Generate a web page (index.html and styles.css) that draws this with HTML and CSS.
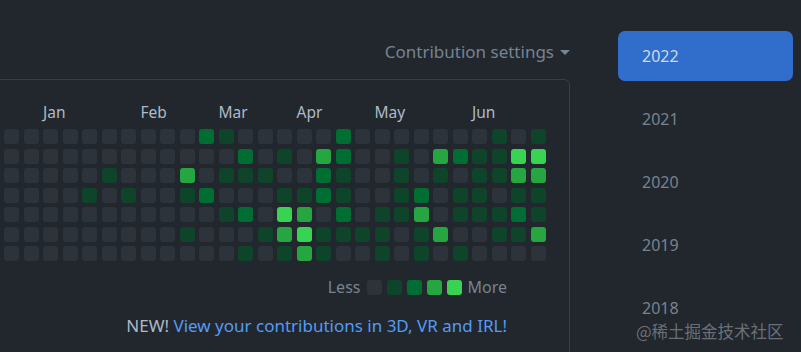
FILE: index.html
```html
<!DOCTYPE html>
<html lang="en">
<head>
    <meta charset="UTF-8">
    <meta name="viewport" content="width=device-width, initial-scale=1.0">
    <title>Contributions</title>
    <link rel="stylesheet" href="styles.css">
</head>
<body>
    <div class="page">
        <div class="main">
            <div class="header">
                <span class="settings">Contribution settings</span>
                <span class="caret"></span>
            </div>
            <div class="calendar">
                <div class="months">
                    <span class="m-jan">Jan</span>
                    <span class="m-feb">Feb</span>
                    <span class="m-mar">Mar</span>
                    <span class="m-apr">Apr</span>
                    <span class="m-may">May</span>
                    <span class="m-jun">Jun</span>
                </div>
                <div class="days" id="days"></div>
                <div class="legend">
                    <span>Less</span>
                    <span class="day l0"></span>
                    <span class="day l1"></span>
                    <span class="day l2"></span>
                    <span class="day l3"></span>
                    <span class="day l4"></span>
                    <span>More</span>
                </div>
                <div class="news">
                    NEW! <a href="#">View your contributions in 3D, VR and IRL!</a>
                </div>
            </div>
        </div>
        <ul class="years">
            <li class="year active">2022</li>
            <li class="year">2021</li>
            <li class="year">2020</li>
            <li class="year">2019</li>
            <li class="year">2018</li>
        </ul>
    </div>
    <div class="watermark">@稀土掘金技术社区</div>

    <script>
        const rows = [
            '0000000000210000020000000101',
            '0000000000002010320010321144',
            '0000010003011100210010101133',
            '0000101001200011210012011011',
            '0000000000012043020113011121',
            '0000000001000134111101300113',
            '0000000000001013100101010000'
        ];
        const days = document.getElementById('days');
        rows.forEach(row => {
            for (const level of row) {
                const cell = document.createElement('span');
                cell.className = 'day l' + level;
                days.appendChild(cell);
            }
        });
    </script>
</body>
</html>
```

FILE: styles.css
```css
body {
    margin: 0;
    background-color: #22272e;
    font-family: "Noto Sans", "Open Sans", sans-serif;
    overflow: hidden;
}

.page {
    display: flex;
    align-items: flex-start;
}

.main {
    width: 570px;
}

.header {
    height: 79px;
    padding-top: 24px;
    box-sizing: border-box;
    display: flex;
    align-items: center;
    justify-content: flex-end;
    gap: 6px;
}

.settings {
    color: #768390;
    font-size: 17px;
}

.caret {
    width: 0;
    height: 0;
    border-left: 5px solid transparent;
    border-right: 5px solid transparent;
    border-top: 5px solid #768390;
    margin-top: 2px;
}

.calendar {
    margin-left: -20px;
    padding: 22px 0 0 23px;
    height: 250px;
    border: 1px solid #373e47;
    border-bottom: none;
    border-top-right-radius: 6px;
}

.months {
    display: grid;
    grid-template-columns: repeat(28, 15px);
    column-gap: 4.5px;
    height: 20px;
    line-height: 20px;
    font-size: 15.5px;
    color: #adbac7;
}

.m-jan { grid-column: 3 / span 3; }
.m-feb { grid-column: 8 / span 3; }
.m-mar { grid-column: 12 / span 3; }
.m-apr { grid-column: 16 / span 3; }
.m-may { grid-column: 20 / span 3; }
.m-jun { grid-column: 25 / span 3; }

.days {
    margin-top: 7px;
    display: grid;
    grid-template-columns: repeat(28, 15px);
    grid-template-rows: repeat(7, 15px);
    gap: 4.5px;
}

.day {
    display: block;
    width: 15px;
    height: 15px;
    border-radius: 3px;
}

.l0 { background-color: #2d333b; }
.l1 { background-color: #0e4429; }
.l2 { background-color: #006d32; }
.l3 { background-color: #26a641; }
.l4 { background-color: #39d353; }

.legend {
    margin-top: 16px;
    margin-right: 62px;
    display: flex;
    justify-content: flex-end;
    align-items: center;
    gap: 5px;
    height: 20px;
    font-size: 16px;
    color: #768390;
}

.legend span:first-child {
    margin-right: 2px;
}

.news {
    margin-top: 19px;
    margin-right: 62px;
    text-align: right;
    line-height: 20px;
    font-size: 17px;
    color: #adbac7;
}

.news a {
    color: #539bf5;
    text-decoration: none;
}

.years {
    list-style: none;
    margin: 31px 0 0 48px;
    padding: 0;
    width: 175px;
    display: flex;
    flex-direction: column;
    gap: 13px;
}

.year {
    height: 50px;
    line-height: 50px;
    padding-left: 24px;
    border-radius: 7px;
    font-size: 16px;
    color: #768390;
}

.year:last-child {
    height: 40px;
}

.year.active {
    background-color: #316dca;
    color: #cdd9e5;
}

.watermark {
    position: absolute;
    left: 636px;
    top: 319px;
    font-family: "Noto Sans CJK SC", sans-serif;
    font-size: 16.5px;
    color: rgba(200, 205, 212, 0.45);
}
```
